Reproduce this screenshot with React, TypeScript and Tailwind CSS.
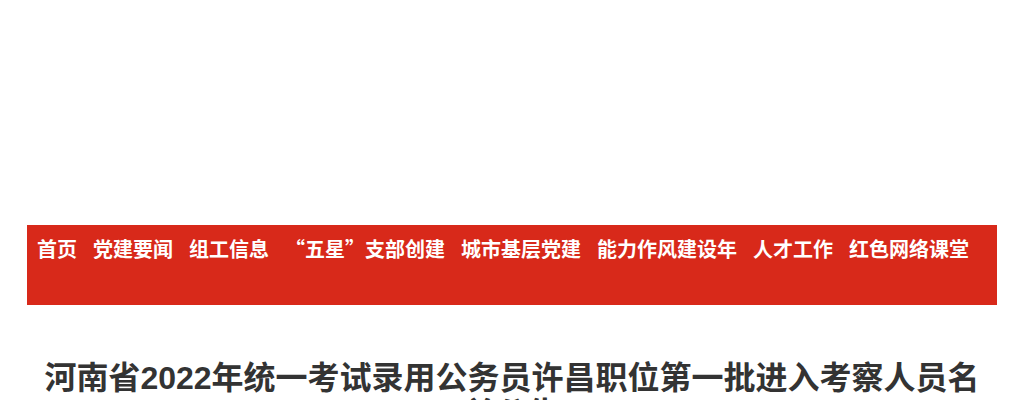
const navItems = [
  '首页',
  '党建要闻',
  '组工信息',
  '“五星”支部创建',
  '城市基层党建',
  '能力作风建设年',
  '人才工作',
  '红色网络课堂',
];

export default function App() {
  return (
    <div
      className="min-h-[400px] bg-white"
      style={{ fontFamily: '"Liberation Sans", "Noto Sans CJK SC", sans-serif' }}
    >
      <div className="h-[225px]" />
      <div className="mx-auto w-[970px]">
        <nav className="h-[80px] bg-[#d8291a]">
          <ul
            className="flex gap-4 pl-2.5"
            style={{ fontFamily: '"Noto Sans CJK SC", sans-serif' }}
          >
            {navItems.map((item) => (
              <li
                key={item}
                className="text-[20px] leading-[48px] font-bold whitespace-nowrap text-white"
              >
                {item}
              </li>
            ))}
          </ul>
        </nav>
        <h1 className="mt-[55px] px-4 text-center text-[32px] leading-[36px] font-bold text-[#333333]">
          河南省2022年统一考试录用公务员许昌职位第一批进入考察人员名单公告
        </h1>
      </div>
    </div>
  );
}
